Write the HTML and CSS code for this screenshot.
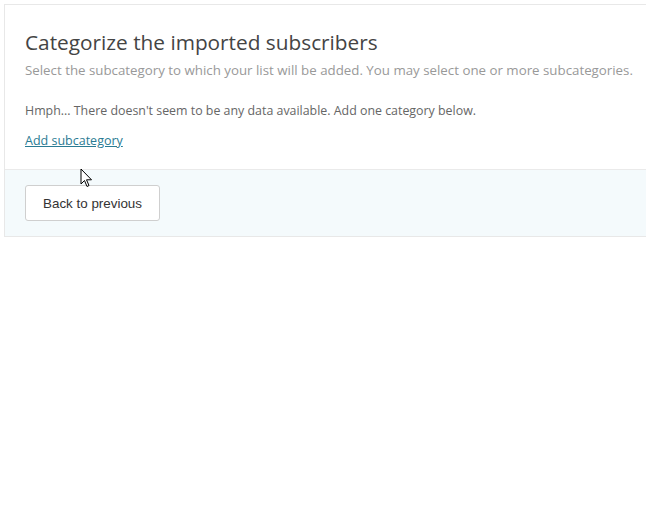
FILE: index.html
```html
<!DOCTYPE html>
<html lang="en">
<head>
    <meta charset="UTF-8">
    <meta name="viewport" content="width=device-width, initial-scale=1.0">
    <title>Categorize subscribers</title>
    <link rel="stylesheet" href="styles.css">
</head>
<body>
    <div class="panel">
        <div class="panel-body">
            <h2 class="title">Categorize the imported subscribers</h2>
            <p class="subtitle">Select the subcategory to which your list will be added. You may select one or more subcategories.</p>
            <p class="empty">Hmph... There doesn't seem to be any data available. Add one category below.</p>
            <a href="#" class="add-link">Add subcategory</a>
        </div>
        <div class="panel-footer">
            <button type="button" class="btn">Back to previous</button>
        </div>
        <svg class="cursor" width="13" height="21" viewBox="0 0 13 21">
            <path d="M1 1 L1 16 L4.5 12.5 L7 18.5 L9 17.5 L6.5 11.8 L11.5 11.8 Z" fill="#fff" stroke="#000" stroke-width="1" stroke-linejoin="miter"/>
        </svg>
    </div>
</body>
</html>
```
FILE: styles.css
```css
html, body {
    margin: 0;
    padding: 0;
    background: #fff;
    overflow: hidden;
}
body {
    font-family: "Open Sans", sans-serif;
    padding: 4px 0 0 4px;
}
.panel {
    position: relative;
    width: 680px;
    border: 1px solid #e8e8e8;
}
.panel-body {
    padding: 21px 20px 19px 20px;
}
.title {
    margin: 0;
    font-size: 20.8px;
    font-weight: 400;
    line-height: 32px;
    color: #444;
}
.subtitle {
    margin: 3px 0 0;
    font-size: 13.3px;
    line-height: 18px;
    color: #999;
}
.empty {
    margin: 23px 0 0;
    font-size: 12.4px;
    line-height: 18px;
    color: #666;
}
.add-link {
    display: inline-block;
    margin-top: 12px;
    font-size: 12.5px;
    line-height: 18px;
    color: #2a7b93;
    text-decoration: underline;
}
.panel-footer {
    border-top: 1px solid #eaeaea;
    background: #f4fafc;
    padding: 15px 20px;
}
.btn {
    font-family: "Liberation Sans", Arial, sans-serif;
    font-size: 13.4px;
    color: #333;
    background: #fff;
    border: 1px solid #cfcfcf;
    border-radius: 3px;
    height: 36px;
    padding: 0 17px;
    cursor: pointer;
}
.cursor {
    position: absolute;
    left: 75px;
    top: 163px;
}
```
